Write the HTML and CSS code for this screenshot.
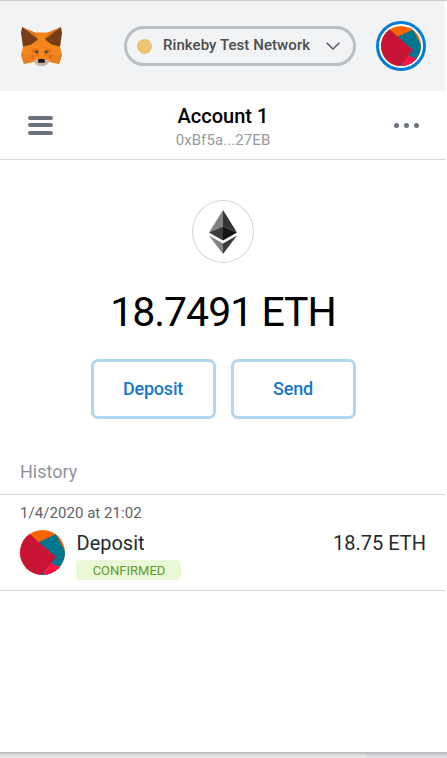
FILE: index.html
```html
<!DOCTYPE html>
<html lang="en">
<head>
<meta charset="utf-8">
<title>Wallet</title>
<link rel="stylesheet" href="styles.css">
</head>
<body>
<svg class="defs" aria-hidden="true">
  <symbol id="identicon" viewBox="0 0 45 45">
    <path fill="#fa6400" d="M0 0h45v45H0z"/>
    <path fill="#00778f" d="M17 13 36 4 50 31 38 50H20z"/>
    <path fill="#ff1645" d="M28.500 32.500 41 37 36 50 22 47z"/>
    <path fill="#c81435" d="M9 3.500 36 27 20 46-2 48-4 10z"/>
  </symbol>
</svg>
<main class="popup">
  <header class="topbar">
    <svg class="fox" viewBox="0 0 41 39">
      <path fill="#f6851b" d="M1 1 14 5.500H27L40 1 39 20 41 28 38 37 28 35 13 35 3 37 0 28 2 20z"/>
      <path fill="#e2761b" d="M1 0 14 5.500 18 14 2 19zM40 0 27 5.500 23 14 39 19z"/>
      <path fill="#e8801f" d="M0 28 10 27.500 12 34 3 37zM41 28 31 27.500 29 34 38 37z"/>
      <path fill="#763d16" d="M1 0 17 12 10.500 17.500 2 19.500 1 13 0 6zM40 0 24 12 30.500 17.500 39 19.500 40 13 41 6z"/>
      <path fill="#dd6f1a" d="M10 24 14 21 18 25 17 29zM31 24 27 21 23 25 24 29zM9 28h5l-2 5zM32 28h-5l2 5z"/>
      <path fill="#f6851b" d="M17 13h7l-1 19h-5z"/>
      <path fill="#c9b5a5" d="M12 34 17 32H24L29 34 26 37.500 23 39H18L15 37.500z"/>
      <path fill="#34485a" d="M14 24 17 23.500 17.500 26 15 26zM27 24 24 23.500 23.500 26 26 26z"/>
      <path fill="#161616" d="M17.500 32h6l.5 3.800h-7z"/>
    </svg>
    <div class="network">
      <span class="dot"></span>
      <span class="network-name">Rinkeby Test Network</span>
      <svg class="chevron" viewBox="0 0 14 8"><path d="M.7.7 7 7 13.300.7" fill="none" stroke="#4d5156" stroke-width="1.300"/></svg>
    </div>
    <div class="avatar"><svg><use href="#identicon"/></svg></div>
  </header>
  <section class="account">
    <div class="burger"><i></i><i></i><i></i></div>
    <div class="account-info">
      <div class="account-name">Account 1</div>
      <div class="address">0xBf5a...27EB</div>
    </div>
    <div class="more"><i></i><i></i><i></i></div>
  </section>
  <section class="overview">
    <div class="coin">
      <svg viewBox="0 0 28 44">
        <path fill="#828384" d="M14 0v16.500L0 22.500z"/>
        <path fill="#343434" d="M14 0v16.500l14 6z"/>
        <path fill="#3c3c3b" d="M14 16.500v14L0 22.500z"/>
        <path fill="#141414" d="M14 16.500v14l14-8z"/>
        <path fill="#828384" d="M0 25.500 14 33.500V44z"/>
        <path fill="#3c3c3b" d="M28 25.500 14 33.500V44z"/>
      </svg>
    </div>
    <div class="balance">18.7491 ETH</div>
    <div class="actions">
      <button>Deposit</button>
      <button>Send</button>
    </div>
  </section>
  <h2 class="history"><span>History</span></h2>
  <article class="tx">
    <div class="date">1/4/2020 at 21:02</div>
    <div class="tx-row">
      <svg class="tx-icon"><use href="#identicon"/></svg>
      <div class="tx-main">
        <div class="tx-title">Deposit</div>
        <div class="status"><span>CONFIRMED</span></div>
      </div>
      <div class="amount">18.75 ETH</div>
    </div>
  </article>
</main>
<footer class="edge"><i></i></footer>
</body>
</html>
```
FILE: styles.css
```css
* { box-sizing: border-box; }
html, body { margin: 0; height: 758px; overflow: hidden; }
body { font-family: Roboto, "Liberation Sans", sans-serif; background: #fff; border-top: 1px solid #cbccce; color: #000; }
.defs { position: absolute; width: 0; height: 0; }
.popup { width: 445px; height: 751px; display: flex; flex-direction: column; }
.topbar { height: 90px; flex: none; background: #f2f3f4; display: flex; align-items: center; padding-left: 21px; }
.fox { width: 41px; height: 39px; }
.network { margin-left: 62px; width: 232px; height: 40px; border: 3px solid #b9bfc4; border-radius: 20px; display: flex; align-items: center; padding-left: 10px; }
.dot { width: 15px; height: 15px; border-radius: 50%; background: #ecc373; }
.network-name { margin-left: 11px; width: 148px; font-size: 15px; font-weight: 500; letter-spacing: .07px; color: #4d4d4d; white-space: nowrap; line-height: 20px; position: relative; top: -1px; }
.chevron { width: 14px; height: 8px; margin-left: 15px; }
.avatar { width: 50px; height: 50px; margin-left: 20px; border: 3px solid #037dd6; border-radius: 50%; padding: 2px; background: #fff; }
.avatar svg { display: block; width: 40px; height: 40px; border-radius: 50%; }
.account { height: 69px; flex: none; border-bottom: 1px solid #d2d8dd; display: flex; align-items: center; justify-content: space-between; padding: 0 26px 0 28px; }
.burger { width: 25px; display: grid; gap: 3.500px; }
.burger i { height: 4px; border-radius: 2px; background: #6a737d; }
.account-info { text-align: center; height: 50px; white-space: nowrap; padding-right: 1px; }
.account-name { font-size: 20px; font-weight: 500; line-height: 24px; margin-top: 4px; }
.address { font-size: 15px; line-height: 20px; letter-spacing: .08px; color: #989a9b; margin-top: 2px; }
.more { display: flex; gap: 5px; }
.more i { width: 5px; height: 5px; border-radius: 50%; background: #6a737d; }
.overview { display: flex; flex-direction: column; align-items: center; padding: 40px 0 0 1px; }
.coin { width: 62px; height: 63px; border: 1px solid #d5d5d5; border-radius: 50%; display: grid; place-items: center; }
.coin svg { width: 28px; height: 44px; }
.balance { height: 50px; margin-top: 24px; font-size: 41px; line-height: 50px; letter-spacing: -1px; white-space: nowrap; }
.actions { display: flex; gap: 15px; margin-top: 22px; }
.actions button { width: 125px; height: 60px; padding: 0; border: 3px solid #b0d7f1; border-radius: 7px; background: #fff; color: #1577cc; font: 500 18px/20px Roboto, sans-serif; letter-spacing: -.2px; }
.history { margin: 34px 0 0; height: 42px; padding: 7px 20px 0; border-bottom: 1px solid #d6d6d6; color: #8e949c; font-size: 18px; line-height: 24px; font-weight: 400; }
.tx { height: 96px; border-bottom: 1px solid #d6d6d6; padding: 9px 19px 0 20px; }
.date { font-size: 15px; line-height: 18px; letter-spacing: .05px; color: #5f6368; }
.tx-row { display: flex; margin-top: 8px; }
.tx-icon { width: 45px; height: 45px; border-radius: 50%; }
.tx-main { margin-left: 11px; flex: 1; }
.tx-title { font-size: 20px; line-height: 26px; color: #24292e; padding-left: .5px; }
.status { width: 105px; height: 20px; margin-top: 4px; border-radius: 4px; background: #e9f8d5; color: #5f9a2f; font-size: 13px; line-height: 21px; text-align: center; padding-left: 1px; }
.amount { font-size: 20px; line-height: 26px; color: #24292e; }
.edge { height: 6px; background: linear-gradient(#b4b6b8, #d8dadb 50%, #eceded); }
.edge i { display: block; margin-left: 366px; height: 6px; background: rgba(180, 183, 200, .15); }
```
